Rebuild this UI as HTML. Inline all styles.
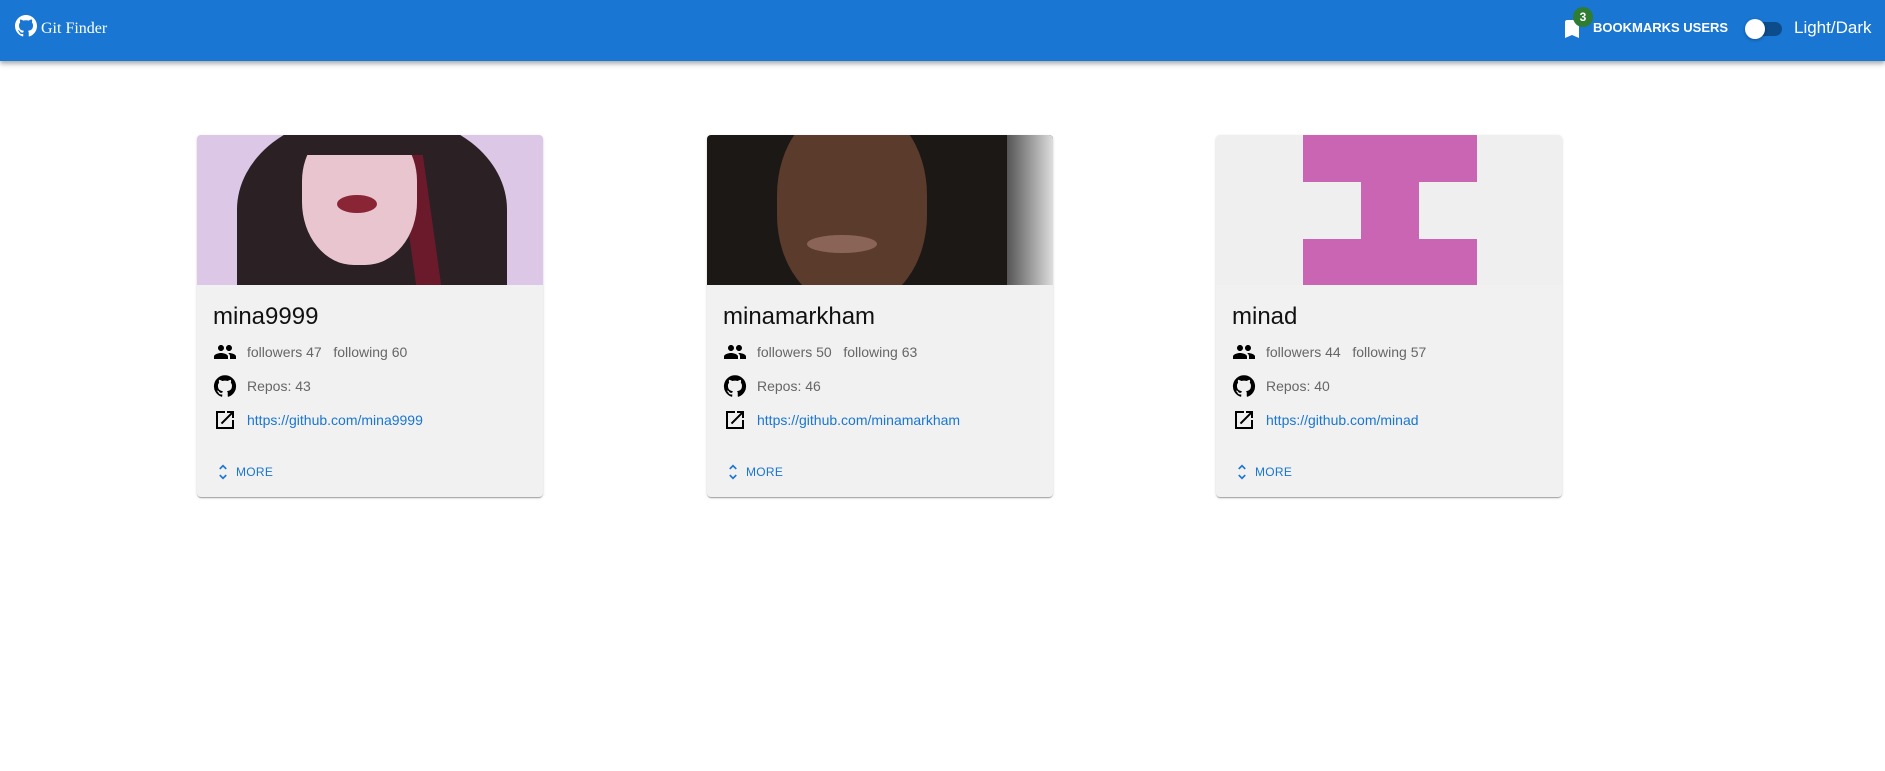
<!DOCTYPE html>
<html><head><meta charset="utf-8"><style>
*{box-sizing:border-box;margin:0;padding:0}
body{width:1885px;height:771px;background:#fff;font-family:"Liberation Sans",sans-serif;position:relative;overflow:hidden}
.bar{position:absolute;left:0;top:0;width:1885px;height:61px;background:#1976d2;box-shadow:0 2px 4px rgba(0,0,0,.25),0 4px 5px rgba(0,0,0,.12)}
.card{position:absolute;top:135px;width:346px;height:362px;background:#f1f1f1;border-radius:4px;overflow:hidden;box-shadow:0 2px 1px -1px rgba(0,0,0,.2),0 1px 1px rgba(0,0,0,.14),0 1px 3px rgba(0,0,0,.12)}
.img{position:absolute;left:0;top:0;width:346px;height:150px;overflow:hidden}
.name{position:absolute;left:16px;top:168px;font-size:24px;color:#111}
.row{position:absolute;left:16px;height:24px;display:flex;align-items:center;font-size:14px;color:#666}
.row svg{width:24px;height:24px;margin-right:10px}
.row a{color:#1976d2;text-decoration:none}
.more{position:absolute;left:16px;top:327px;display:flex;align-items:center;color:#1976d2;font-size:12px;letter-spacing:.3px}
.more svg{width:20px;height:20px;margin-right:3px}
</style></head><body>
<div class="bar">
<svg style="position:absolute;left:15px;top:15px" width="22" height="22" viewBox="0 0 16 16"><path fill="#fff" d="M8 0C3.58 0 0 3.58 0 8c0 3.54 2.29 6.53 5.47 7.590.4.07.55-.17.55-.38 0-.19-.01-.82-.01-1.49-2.01.37-2.53-.49-2.69-.94-.09-.23-.48-.94-.82-1.13-.28-.15-.68-.52-.01-.53.63-.01 1.08.58 1.23.82.72 1.21 1.87.87 2.33.66.07-.52.28-.87.51-1.07-1.78-.2-3.64-.89-3.640-3.95 0-.87.31-1.59.82-2.15-.08-.2-.36-1.02.08-2.12 0 0 .67-.21 2.2.82.64-.18 1.32-.27 2-.27.68 0 1.36.09 2 .27 1.53-1.04 2.2-.82 2.2-.82.44 1.1.16 1.92.08 2.12.51.56.82 1.27.82 2.15 0 3.07-1.87 3.75-3.65 3.95.29.25.54.73.54 1.48 0 1.07-.01 1.93-.01 2.2 0 .21.15.46.55.38A8.013 8.013 0 0016 8c0-4.42-3.58-8-8-8z"/></svg>
<div style="position:absolute;left:41px;top:20px;color:#fff;font-family:'Liberation Serif',serif;font-size:16px">Git Finder</div>
<svg style="position:absolute;left:1560px;top:17px" width="24" height="24" viewBox="0 0 24 24"><path fill="#fff" d="M17 3H7c-1.1 0-2 .9-2 2v16l7-3 7 3V5c0-1.1-.9-2-2-2z"/></svg>
<div style="position:absolute;left:1573px;top:7px;width:20px;height:20px;border-radius:10px;background:#2e7d32;color:#fff;font-size:12px;font-weight:bold;text-align:center;line-height:20px">3</div>
<div style="position:absolute;left:1593px;top:20px;color:#fff;font-size:13px;font-weight:bold">BOOKMARKS USERS</div>
<div style="position:absolute;left:1748px;top:22px;width:34px;height:14px;border-radius:7px;background:#0d4c8b"></div>
<div style="position:absolute;left:1745px;top:19px;width:20px;height:20px;border-radius:10px;background:#fff;box-shadow:0 1px 3px rgba(0,0,0,.3)"></div>
<div style="position:absolute;left:1794px;top:18px;color:#fff;font-size:17px">Light/Dark</div>
</div>

<div class="card" style="left:197px">
<div class="img" style="background:#dcc7e6">
<div style="position:absolute;left:40px;top:-20px;width:270px;height:210px;border-radius:45% 45% 0 0;background:#2b2024"></div>
<div style="position:absolute;left:210px;top:20px;width:25px;height:130px;background:#6b1a2b;transform:skewX(8deg)"></div>
<div style="position:absolute;left:105px;top:-10px;width:115px;height:140px;border-radius:40% 40% 45% 45%;background:#e8c5cf"></div>
<div style="position:absolute;left:105px;top:-10px;width:115px;height:30px;background:#2b2024"></div>
<div style="position:absolute;left:140px;top:60px;width:40px;height:18px;border-radius:50%;background:#8a2535"></div>
</div>
<div class="name">mina9999</div>
<div class="row" style="top:205px"><svg viewBox="0 0 24 24"><path d="M16 11c1.66 0 2.99-1.34 2.99-3S17.66 5 16 5c-1.66 0-3 1.34-3 3s1.34 3 3 3zm-8 0c1.66 0 2.99-1.34 2.99-3S9.66 5 8 5C6.34 5 5 6.34 5 8s1.34 3 3 3zm0 2c-2.33 0-7 1.17-7 3.5V19h14v-2.5c0-2.33-4.67-3.5-7-3.5zm8 0c-.29 0-.62.02-.97.05 1.16.84 1.97 1.97 1.97 3.45V19h6v-2.5c0-2.33-4.67-3.5-7-3.5z"/></svg>followers 47&nbsp;&nbsp;&nbsp;following 60</div>
<div class="row" style="top:239px"><svg viewBox="0 0 24 24"><path d="M12 1.27a11 11 0 00-3.48 21.46c.55.09.73-.28.73-.55v-1.84c-3.03.64-3.67-1.46-3.67-1.46-.55-1.29-1.28-1.65-1.28-1.65-.92-.65.1-.65.1-.65 1.1 0 1.73 1.1 1.73 1.1.92 1.65 2.57 1.2 3.21.92a2 2 0 01.64-1.47c-2.47-.27-5.04-1.19-5.04-5.5 0-1.1.46-2.1 1.2-2.84a3.76 3.76 0 010-2.93s.91-.28 3.11 1.1c1.8-.49 3.7-.49 5.5 0 2.1-1.38 3.02-1.1 3.02-1.1a3.76 3.76 0 010 2.93c.83.74 1.2 1.74 1.2 2.94 0 4.21-2.57 5.13-5.04 5.4.45.37.82.92.82 2.02v3.03c0 .27.1.64.73.55A11 11 0 0012 1.27"/></svg>Repos: 43</div>
<div class="row" style="top:273px"><svg viewBox="0 0 24 24"><path d="M19 19H5V5h7V3H3v18h18v-9h-2v7zM14 3v2h3.59l-9.83 9.83 1.41 1.41L19 6.41V10h2V3h-7z"/></svg><a>https://github.com/mina9999</a></div>
<div class="more"><svg viewBox="0 0 24 24"><path fill="#1976d2" d="M12 5.83L15.17 9l1.41-1.41L12 3 7.41 7.59 8.83 9 12 5.83zm0 12.34L8.83 15l-1.41 1.41L12 21l4.59-4.59L15.17 15 12 18.17z"/></svg>MORE</div>
</div>

<div class="card" style="left:707px">
<div class="img" style="background:#1c1816">
<div style="position:absolute;left:300px;top:0;width:46px;height:150px;background:linear-gradient(90deg,#555,#ddd)"></div>
<div style="position:absolute;left:70px;top:-30px;width:150px;height:200px;border-radius:45%;background:#5a3b2c"></div>
<div style="position:absolute;left:100px;top:100px;width:70px;height:18px;border-radius:50%;background:#8b6458"></div>
</div>
<div class="name">minamarkham</div>
<div class="row" style="top:205px"><svg viewBox="0 0 24 24"><path d="M16 11c1.66 0 2.99-1.34 2.99-3S17.66 5 16 5c-1.66 0-3 1.34-3 3s1.34 3 3 3zm-8 0c1.66 0 2.99-1.34 2.99-3S9.66 5 8 5C6.34 5 5 6.34 5 8s1.34 3 3 3zm0 2c-2.33 0-7 1.17-7 3.5V19h14v-2.5c0-2.33-4.67-3.5-7-3.5zm8 0c-.29 0-.62.02-.97.05 1.16.84 1.97 1.97 1.97 3.45V19h6v-2.5c0-2.33-4.67-3.5-7-3.5z"/></svg>followers 50&nbsp;&nbsp;&nbsp;following 63</div>
<div class="row" style="top:239px"><svg viewBox="0 0 24 24"><path d="M12 1.27a11 11 0 00-3.48 21.46c.55.09.73-.28.73-.55v-1.84c-3.03.64-3.67-1.46-3.67-1.46-.55-1.29-1.28-1.65-1.28-1.65-.92-.65.1-.65.1-.65 1.1 0 1.73 1.1 1.73 1.1.92 1.65 2.57 1.2 3.21.92a2 2 0 01.64-1.47c-2.47-.27-5.04-1.19-5.04-5.5 0-1.1.46-2.1 1.2-2.84a3.76 3.76 0 010-2.93s.91-.28 3.11 1.1c1.8-.49 3.7-.49 5.5 0 2.1-1.38 3.02-1.1 3.02-1.1a3.76 3.76 0 010 2.93c.83.74 1.2 1.74 1.2 2.94 0 4.21-2.57 5.13-5.04 5.4.45.37.82.92.82 2.02v3.03c0 .27.1.64.73.55A11 11 0 0012 1.27"/></svg>Repos: 46</div>
<div class="row" style="top:273px"><svg viewBox="0 0 24 24"><path d="M19 19H5V5h7V3H3v18h18v-9h-2v7zM14 3v2h3.59l-9.83 9.83 1.41 1.41L19 6.41V10h2V3h-7z"/></svg><a>https://github.com/minamarkham</a></div>
<div class="more"><svg viewBox="0 0 24 24"><path fill="#1976d2" d="M12 5.83L15.17 9l1.41-1.41L12 3 7.41 7.59 8.83 9 12 5.83zm0 12.34L8.83 15l-1.41 1.41L12 21l4.59-4.59L15.17 15 12 18.17z"/></svg>MORE</div>
</div>

<div class="card" style="left:1216px">
<div class="img" style="background:#efefef">
<div style="position:absolute;left:87px;top:0;width:174px;height:47px;background:#ca65b4"></div>
<div style="position:absolute;left:145px;top:0;width:58px;height:150px;background:#ca65b4"></div>
<div style="position:absolute;left:87px;top:104px;width:174px;height:46px;background:#ca65b4"></div>
</div>
<div class="name">minad</div>
<div class="row" style="top:205px"><svg viewBox="0 0 24 24"><path d="M16 11c1.66 0 2.99-1.34 2.99-3S17.66 5 16 5c-1.66 0-3 1.34-3 3s1.34 3 3 3zm-8 0c1.66 0 2.99-1.34 2.99-3S9.66 5 8 5C6.34 5 5 6.34 5 8s1.34 3 3 3zm0 2c-2.33 0-7 1.17-7 3.5V19h14v-2.5c0-2.33-4.67-3.5-7-3.5zm8 0c-.29 0-.62.02-.97.05 1.16.84 1.97 1.97 1.97 3.45V19h6v-2.5c0-2.33-4.67-3.5-7-3.5z"/></svg>followers 44&nbsp;&nbsp;&nbsp;following 57</div>
<div class="row" style="top:239px"><svg viewBox="0 0 24 24"><path d="M12 1.27a11 11 0 00-3.48 21.46c.55.09.73-.28.73-.55v-1.84c-3.03.64-3.67-1.46-3.67-1.46-.55-1.29-1.28-1.65-1.28-1.65-.92-.65.1-.65.1-.65 1.1 0 1.73 1.1 1.73 1.1.92 1.65 2.57 1.2 3.21.92a2 2 0 01.64-1.47c-2.47-.27-5.04-1.19-5.04-5.5 0-1.1.46-2.1 1.2-2.84a3.76 3.76 0 010-2.93s.91-.28 3.11 1.1c1.8-.49 3.7-.49 5.5 0 2.1-1.38 3.02-1.1 3.02-1.1a3.76 3.76 0 010 2.93c.83.74 1.2 1.74 1.2 2.94 0 4.21-2.57 5.13-5.04 5.4.45.37.82.92.82 2.02v3.03c0 .27.1.64.73.55A11 11 0 0012 1.27"/></svg>Repos: 40</div>
<div class="row" style="top:273px"><svg viewBox="0 0 24 24"><path d="M19 19H5V5h7V3H3v18h18v-9h-2v7zM14 3v2h3.59l-9.83 9.83 1.41 1.41L19 6.41V10h2V3h-7z"/></svg><a>https://github.com/minad</a></div>
<div class="more"><svg viewBox="0 0 24 24"><path fill="#1976d2" d="M12 5.83L15.17 9l1.41-1.41L12 3 7.41 7.59 8.83 9 12 5.83zm0 12.34L8.83 15l-1.41 1.41L12 21l4.59-4.59L15.17 15 12 18.17z"/></svg>MORE</div>
</div>
</body></html>
